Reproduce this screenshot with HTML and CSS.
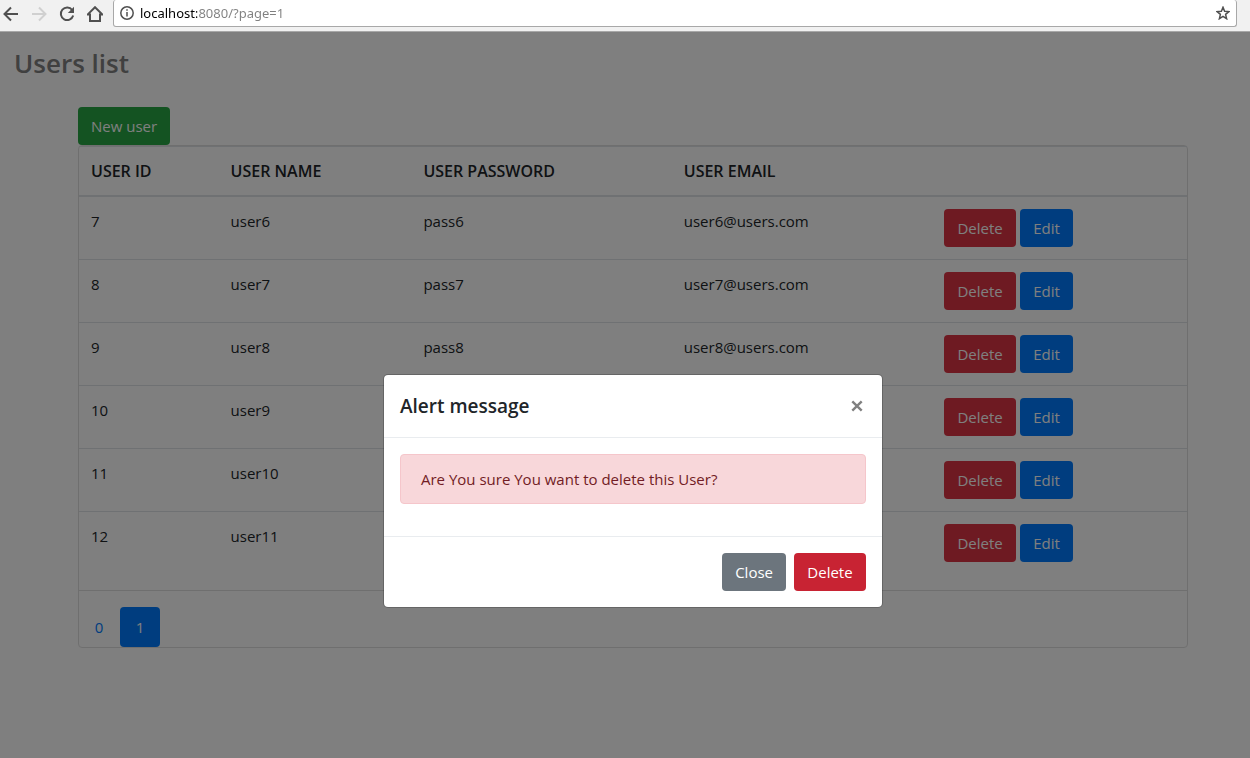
FILE: index.html
```html
<!DOCTYPE html>
<html lang="en">
<head>
<meta charset="utf-8">
<meta name="viewport" content="width=device-width, initial-scale=1">
<title>Users list</title>
<link rel="stylesheet" href="styles.css">
</head>
<body>
<header class="toolbar">
  <nav class="toolbar-nav" aria-label="Browser">
    <button class="icon-btn" type="button" aria-label="Back">
      <svg class="icon" viewBox="0 0 16 16"><path d="M15 8H2M8 1.5L1.5 8 8 14.5"/></svg>
    </button>
    <button class="icon-btn icon-btn-off" type="button" aria-label="Forward" disabled>
      <svg class="icon" viewBox="0 0 16 16"><path d="M1 8h13M8 1.5L14.500 8 8 14.500"/></svg>
    </button>
    <button class="icon-btn" type="button" aria-label="Reload">
      <svg class="icon" viewBox="0 0 16 16"><path d="M13.200 4A6.300 6.300 0 1 0 14.200 9.500"/><path class="solid" d="M15 .8V7H8.800z"/></svg>
    </button>
    <button class="icon-btn" type="button" aria-label="Home">
      <svg class="icon" viewBox="0 0 16 16"><path d="M.8 8.400L8 1.200l7.200 7.200H13V15H3V8.400z"/></svg>
    </button>
  </nav>
  <div class="address">
    <svg class="info" viewBox="0 0 14 14" aria-hidden="true"><circle cx="7" cy="7" r="6.200"/><path d="M7 6v4.500M7 3.200v1.600"/></svg>
    <input class="address-input" type="text" aria-label="Address" value="localhost:8080/?page=1">
    <button class="star-btn" type="button" aria-label="Bookmark this page">
      <svg class="star" viewBox="0 0 14 14"><path d="M7 1.300l1.600 4 4.300.3-3.300 2.800 1 4.300L7 10.400l-3.600 2.300 1-4.300L1.100 5.600l4.300-.3z"/></svg>
    </button>
  </div>
</header>
<div class="page">
  <main class="content">
    <h1 class="page-title">Users list</h1>
    <div class="container">
      <button class="btn btn-success" type="button">New user</button>
      <section class="card">
        <table class="table">
          <colgroup>
            <col class="col-id"><col class="col-name"><col class="col-password"><col class="col-email"><col class="col-actions">
          </colgroup>
          <thead>
            <tr><th>USER ID</th><th>USER NAME</th><th>USER PASSWORD</th><th>USER EMAIL</th><th></th></tr>
          </thead>
          <tbody>
            <tr><td>7</td><td>user6</td><td>pass6</td><td>user6@users.com</td><td><div class="actions"><button class="btn btn-danger" type="button">Delete</button><button class="btn btn-primary" type="button">Edit</button></div></td></tr>
            <tr><td>8</td><td>user7</td><td>pass7</td><td>user7@users.com</td><td><div class="actions"><button class="btn btn-danger" type="button">Delete</button><button class="btn btn-primary" type="button">Edit</button></div></td></tr>
            <tr><td>9</td><td>user8</td><td>pass8</td><td>user8@users.com</td><td><div class="actions"><button class="btn btn-danger" type="button">Delete</button><button class="btn btn-primary" type="button">Edit</button></div></td></tr>
            <tr><td>10</td><td>user9</td><td>pass9</td><td>user9@users.com</td><td><div class="actions"><button class="btn btn-danger" type="button">Delete</button><button class="btn btn-primary" type="button">Edit</button></div></td></tr>
            <tr><td>11</td><td>user10</td><td>pass10</td><td>user10@users.com</td><td><div class="actions"><button class="btn btn-danger" type="button">Delete</button><button class="btn btn-primary" type="button">Edit</button></div></td></tr>
            <tr><td>12</td><td>user11</td><td>pass11</td><td>user11@users.com</td><td><div class="actions"><button class="btn btn-danger" type="button">Delete</button><button class="btn btn-primary" type="button">Edit</button></div></td></tr>
          </tbody>
        </table>
        <nav class="pager" aria-label="Pages">
          <a class="pager-link" href="?page=0">0</a>
          <a class="pager-link pager-link-active" href="?page=1" aria-current="page">1</a>
        </nav>
      </section>
    </div>
  </main>
  <div class="backdrop">
    <div class="modal" role="dialog" aria-modal="true" aria-labelledby="modal-title">
      <div class="modal-header">
        <h2 class="modal-title" id="modal-title">Alert message</h2>
        <button class="modal-close" type="button" aria-label="Dismiss">
          <svg class="cross" viewBox="0 0 12 12"><path d="M1.300 1.300l9.400 9.400M10.700 1.300L1.300 10.700"/></svg>
        </button>
      </div>
      <div class="modal-body">
        <p class="alert">Are You sure You want to delete this User?</p>
      </div>
      <div class="modal-footer">
        <button class="btn btn-secondary" type="button">Close</button>
        <button class="btn btn-confirm" type="button">Delete</button>
      </div>
    </div>
  </div>
</div>
</body>
</html>
```
FILE: styles.css
```css
* {
  box-sizing: border-box;
}

body {
  margin: 0;
  min-height: 100vh;
  display: flex;
  flex-direction: column;
  font-family: "Open Sans", "Noto Sans", sans-serif;
  font-size: 15px;
  line-height: 24px;
  color: #212529;
  background: #fff;
}

button,
input {
  font: inherit;
}

/* Browser toolbar */
.toolbar {
  display: flex;
  gap: 10px;
  height: 32px;
  padding: 0 13px 4px 3px;
  background: #f1f1f1;
  border-bottom: 1px solid #a8a8a8;
}

.toolbar-nav {
  display: flex;
  align-items: center;
  gap: 12px;
}

.icon-btn,
.star-btn {
  display: flex;
  padding: 0;
  border: 0;
  background: none;
  color: #505050;
}

.icon-btn-off {
  color: #d0d0d0;
}

.icon {
  width: 16px;
  height: 16px;
  fill: none;
  stroke: currentColor;
  stroke-width: 2;
}

.icon .solid {
  fill: currentColor;
  stroke: none;
}

.address {
  flex: 1;
  display: flex;
  align-items: center;
  gap: 6px;
  padding: 0 6px;
  background: #fff;
  border: 1px solid #a8a8a8;
  border-top: 0;
  border-radius: 3px;
}

.info,
.star {
  width: 14px;
  height: 14px;
  fill: none;
  stroke: #505050;
  stroke-width: 1.5;
}

.address-input {
  flex: 1;
  min-width: 0;
  padding: 0;
  border: 0;
  outline: 0;
  font-family: "Noto Sans", sans-serif;
  font-size: 13px;
  line-height: 20px;
  color: transparent;
  background: linear-gradient(90deg, #000 57px, #808080 57px) text;
}

/* Page */
.page {
  position: relative;
  flex: 1;
}

.content {
  padding: 14px 0 16px;
}

.page-title {
  margin: 0 0 27px;
  padding-left: 14px;
  font-size: 26px;
  font-weight: 600;
  line-height: 34px;
  color: #808080;
}

.container {
  max-width: 1126px;
  margin: 0 62px 0 auto;
  padding-left: 16px;
}

.btn {
  display: block;
  padding: 6px 12px;
  border: 1px solid transparent;
  border-radius: 4px;
  color: #fff;
  white-space: nowrap;
}

.btn-success {
  background: #28a745;
}

.btn-danger {
  background: #dc3545;
}

.btn-primary {
  background: #007bff;
}

.btn-secondary {
  background: #6c757d;
}

.btn-confirm {
  background: #c82333;
}

.btn-danger,
.btn-confirm {
  min-width: 72px;
}

.card {
  border: 1px solid #dfdfdf;
  border-radius: 4px;
}

.table {
  width: 100%;
  margin-bottom: 16px;
  border-spacing: 0;
  table-layout: fixed;
}

.col-id {
  width: 12.6%;
}

.col-name {
  width: 17.4%;
}

.col-password {
  width: 23.5%;
}

.col-email {
  width: 23.5%;
}

.table th,
.table td {
  padding: 12px;
  text-align: left;
  vertical-align: top;
}

.table th {
  height: 51px;
  border-top: 1px solid #dee2e6;
  border-bottom: 2px solid #dee2e6;
  font-size: 16px;
  font-weight: 600;
}

.table tr + tr td {
  border-top: 1px solid #dee2e6;
}

.actions {
  display: flex;
  gap: 4px;
}

.pager {
  display: flex;
  gap: 1px;
  padding-top: 16px;
  border-top: 1px solid #dfdfdf;
}

.pager-link {
  min-width: 40px;
  padding: 8px 12px;
  border-radius: 4px;
  text-align: center;
  text-decoration: none;
  color: #007bff;
}

.pager-link-active {
  color: #fff;
  background: #007bff;
}

/* Modal */
.backdrop {
  position: absolute;
  inset: 0;
  padding: 342px 0 16px 16px;
  background: rgba(0, 0, 0, 0.5);
}

.modal {
  max-width: 500px;
  margin: 0 auto;
  background: #fff;
  background-clip: padding-box;
  border: 1px solid rgba(0, 0, 0, 0.2);
  border-radius: 5px;
}

.modal-header {
  display: flex;
  align-items: center;
  justify-content: space-between;
  padding: 16px;
  border-bottom: 1px solid #e9ecef;
}

.modal-title {
  margin: 0;
  font-size: 19px;
  font-weight: 600;
  line-height: 30px;
}

.modal-close {
  display: flex;
  padding: 0 3px;
  border: 0;
  background: none;
}

.cross {
  width: 12px;
  height: 12px;
  fill: none;
  stroke: #808080;
  stroke-width: 2.4;
}

.modal-body {
  padding: 16px;
}

.alert {
  margin: 0 0 16px;
  padding: 12px 20px;
  border: 1px solid #f5c6cb;
  border-radius: 4px;
  color: #721c24;
  background: #f8d7da;
}

.modal-footer {
  display: flex;
  justify-content: flex-end;
  gap: 8px;
  padding: 16px;
  border-top: 1px solid #e9ecef;
}
```
